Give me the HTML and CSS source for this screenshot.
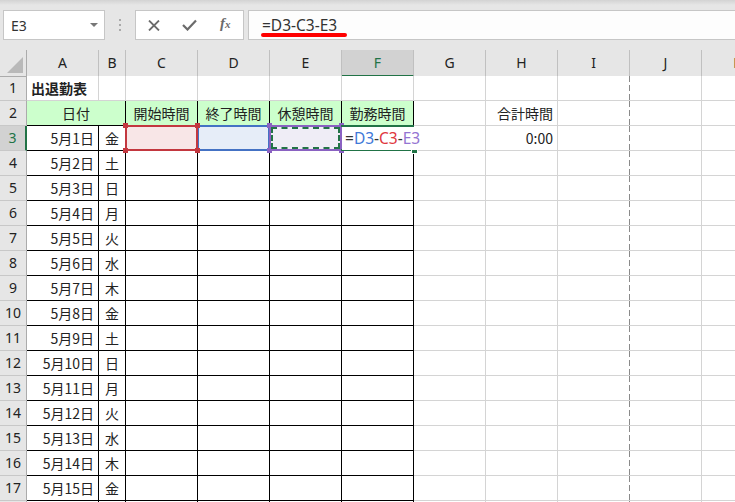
FILE: index.html
```html
<!DOCTYPE html>
<html lang="ja">
<head>
    <meta charset="UTF-8">
    <meta name="viewport" content="width=device-width, initial-scale=1.0">
    <title>出退勤表</title>
    <link rel="stylesheet" href="styles.css">
</head>
<body>

<!-- Formula bar -->
<div class="formula-bar">
    <div class="name-box">E3<span class="arrow"></span></div>
    <div class="grip"><i></i><i></i><i></i></div>
    <div class="fx-buttons">
        <span><svg width="12" height="11" viewBox="0 0 12 11"><path d="M1 0.5L11 10.5M11 0.5L1 10.5" stroke="#6b6b6b" stroke-width="1.8" fill="none"/></svg></span>
        <span><svg width="15" height="12" viewBox="0 0 15 12"><path d="M1 6L5.5 10.5L14 1.5" stroke="#6b6b6b" stroke-width="2.2" fill="none"/></svg></span>
        <span class="fx">f<small>x</small></span>
    </div>
    <div class="formula-input">
        <span>=D3-C3-E3</span>
        <span class="mark"></span>
    </div>
</div>

<!-- Sheet -->
<div class="sheet">
    <div class="row head">
        <div class="corner"><span></span></div>
        <div class="ch">A</div><div class="ch">B</div><div class="ch">C</div><div class="ch">D</div>
        <div class="ch">E</div><div class="ch sel">F</div><div class="ch">G</div><div class="ch">H</div>
        <div class="ch">I</div><div class="ch">J</div><div class="ch">K</div>
    </div>

    <div class="row">
        <div class="rh">1</div>
        <div class="c title">出退勤表</div><div class="c"></div><div class="c"></div><div class="c"></div>
        <div class="c"></div><div class="c"></div><div class="c"></div><div class="c"></div>
        <div class="c pb"></div><div class="c"></div><div class="c"></div>
    </div>

    <div class="row">
        <div class="rh">2</div>
        <div class="c t m green span2">日付</div>
        <div class="c t m green">開始時間</div><div class="c t m green">終了時間</div>
        <div class="c t m green">休憩時間</div><div class="c t m green">勤務時間</div>
        <div class="c"></div><div class="c r">合計時間</div>
        <div class="c pb"></div><div class="c"></div><div class="c"></div>
    </div>

    <div class="row">
        <div class="rh sel">3</div>
        <div class="c t r">5月1日</div><div class="c t m">金</div>
        <div class="c t fill-red"><span class="ref ref-red"></span></div>
        <div class="c t fill-blue"><span class="ref ref-blue"></span></div>
        <div class="c t fill-purple"><span class="ref ref-purple"></span></div>
        <div class="c t active"><span class="sel-box"></span><span class="editor">=<b class="blue">D3</b>-<b class="red">C3</b>-<b class="purple">E3</b></span></div>
        <div class="c"></div><div class="c r">0:00</div>
        <div class="c pb"></div><div class="c"></div><div class="c"></div>
    </div>

    <div class="row"><div class="rh">4</div><div class="c t r">5月2日</div><div class="c t m">土</div><div class="c t"></div><div class="c t"></div><div class="c t"></div><div class="c t"></div><div class="c"></div><div class="c"></div><div class="c pb"></div><div class="c"></div><div class="c"></div></div>
    <div class="row"><div class="rh">5</div><div class="c t r">5月3日</div><div class="c t m">日</div><div class="c t"></div><div class="c t"></div><div class="c t"></div><div class="c t"></div><div class="c"></div><div class="c"></div><div class="c pb"></div><div class="c"></div><div class="c"></div></div>
    <div class="row"><div class="rh">6</div><div class="c t r">5月4日</div><div class="c t m">月</div><div class="c t"></div><div class="c t"></div><div class="c t"></div><div class="c t"></div><div class="c"></div><div class="c"></div><div class="c pb"></div><div class="c"></div><div class="c"></div></div>
    <div class="row"><div class="rh">7</div><div class="c t r">5月5日</div><div class="c t m">火</div><div class="c t"></div><div class="c t"></div><div class="c t"></div><div class="c t"></div><div class="c"></div><div class="c"></div><div class="c pb"></div><div class="c"></div><div class="c"></div></div>
    <div class="row"><div class="rh">8</div><div class="c t r">5月6日</div><div class="c t m">水</div><div class="c t"></div><div class="c t"></div><div class="c t"></div><div class="c t"></div><div class="c"></div><div class="c"></div><div class="c pb"></div><div class="c"></div><div class="c"></div></div>
    <div class="row"><div class="rh">9</div><div class="c t r">5月7日</div><div class="c t m">木</div><div class="c t"></div><div class="c t"></div><div class="c t"></div><div class="c t"></div><div class="c"></div><div class="c"></div><div class="c pb"></div><div class="c"></div><div class="c"></div></div>
    <div class="row"><div class="rh">10</div><div class="c t r">5月8日</div><div class="c t m">金</div><div class="c t"></div><div class="c t"></div><div class="c t"></div><div class="c t"></div><div class="c"></div><div class="c"></div><div class="c pb"></div><div class="c"></div><div class="c"></div></div>
    <div class="row"><div class="rh">11</div><div class="c t r">5月9日</div><div class="c t m">土</div><div class="c t"></div><div class="c t"></div><div class="c t"></div><div class="c t"></div><div class="c"></div><div class="c"></div><div class="c pb"></div><div class="c"></div><div class="c"></div></div>
    <div class="row"><div class="rh">12</div><div class="c t r">5月10日</div><div class="c t m">日</div><div class="c t"></div><div class="c t"></div><div class="c t"></div><div class="c t"></div><div class="c"></div><div class="c"></div><div class="c pb"></div><div class="c"></div><div class="c"></div></div>
    <div class="row"><div class="rh">13</div><div class="c t r">5月11日</div><div class="c t m">月</div><div class="c t"></div><div class="c t"></div><div class="c t"></div><div class="c t"></div><div class="c"></div><div class="c"></div><div class="c pb"></div><div class="c"></div><div class="c"></div></div>
    <div class="row"><div class="rh">14</div><div class="c t r">5月12日</div><div class="c t m">火</div><div class="c t"></div><div class="c t"></div><div class="c t"></div><div class="c t"></div><div class="c"></div><div class="c"></div><div class="c pb"></div><div class="c"></div><div class="c"></div></div>
    <div class="row"><div class="rh">15</div><div class="c t r">5月13日</div><div class="c t m">水</div><div class="c t"></div><div class="c t"></div><div class="c t"></div><div class="c t"></div><div class="c"></div><div class="c"></div><div class="c pb"></div><div class="c"></div><div class="c"></div></div>
    <div class="row"><div class="rh">16</div><div class="c t r">5月14日</div><div class="c t m">木</div><div class="c t"></div><div class="c t"></div><div class="c t"></div><div class="c t"></div><div class="c"></div><div class="c"></div><div class="c pb"></div><div class="c"></div><div class="c"></div></div>
    <div class="row"><div class="rh">17</div><div class="c t r">5月15日</div><div class="c t m">金</div><div class="c t"></div><div class="c t"></div><div class="c t"></div><div class="c t"></div><div class="c"></div><div class="c"></div><div class="c pb"></div><div class="c"></div><div class="c"></div></div>
    <div class="row"><div class="rh"></div><div class="c t"></div><div class="c t"></div><div class="c t"></div><div class="c t"></div><div class="c t"></div><div class="c t"></div><div class="c"></div><div class="c"></div><div class="c pb"></div><div class="c"></div><div class="c"></div></div>
</div>

</body>
</html>
```

FILE: styles.css
```css
body {
    margin: 0;
    height: 502px;
    overflow: hidden;
    background-color: #e6e6e6;
    font-family: "Noto Sans CJK JP", sans-serif;
    color: #222;
}

/* Formula bar */
.formula-bar {
    display: flex;
    align-items: center;
    height: 50px;
    padding-left: 3px;
    background: linear-gradient(#d3d3d3, #e6e6e6 5px);
    overflow: hidden;
}
.name-box {
    flex: none;
    width: 102px;
    height: 30px;
    box-sizing: border-box;
    border: 1px solid #c6c6c6;
    background-color: #fff;
    display: flex;
    align-items: center;
    justify-content: space-between;
    padding: 0 6px 0 7px;
    font-family: "Noto Sans", sans-serif;
    font-size: 14px;
    color: #333;
}
.name-box .arrow {
    border-left: 4px solid transparent;
    border-right: 4px solid transparent;
    border-top: 4px solid #777;
}
.grip {
    flex: none;
    width: 30px;
    display: flex;
    flex-direction: column;
    align-items: center;
    gap: 3px;
}
.grip i {
    width: 2px;
    height: 2px;
    background-color: #aaa;
}
.fx-buttons {
    flex: none;
    width: 109px;
    height: 30px;
    box-sizing: border-box;
    border: 1px solid #c6c6c6;
    background-color: #fff;
    display: flex;
    margin-right: 4px;
}
.fx-buttons span {
    width: 36px;
    display: flex;
    justify-content: center;
    align-items: center;
}
.fx-buttons .fx {
    font-family: "Liberation Serif", serif;
    font-style: italic;
    font-weight: bold;
    font-size: 15px;
    color: #6b6b6b;
    align-items: baseline;
    padding-top: 4px;
}
.fx small {
    font-size: 11px;
}
.formula-input {
    flex: none;
    width: 520px;
    height: 30px;
    box-sizing: border-box;
    border: 1px solid #c6c6c6;
    background-color: #fdfdfd;
    position: relative;
    display: flex;
    align-items: center;
    padding-left: 13px;
    font-family: "Noto Sans", sans-serif;
    font-size: 15.5px;
    color: #333;
}
.formula-input .mark {
    position: absolute;
    left: 12px;
    top: 22px;
    width: 86px;
    height: 4px;
    border-radius: 2px;
    background-color: #f00;
}

/* Sheet grid */
.row {
    display: grid;
    grid-template-columns: 27px 72px 27px repeat(9, 72px);
    height: 25px;
}
.row.head {
    height: 26px;
}
.corner {
    display: flex;
    justify-content: flex-end;
    align-items: flex-end;
    padding: 0 3px 3px 0;
    box-sizing: border-box;
    border-right: 1px solid #ababab;
    border-bottom: 1px solid #ababab;
}
.corner span {
    width: 16px;
    height: 16px;
    background-color: #b9b9b9;
    clip-path: polygon(100% 0, 100% 100%, 0 100%);
}
.ch {
    box-sizing: border-box;
    border-right: 1px solid #c0c0c0;
    border-bottom: 1px solid #ababab;
    text-align: center;
    line-height: 25px;
    font-family: "Noto Sans", sans-serif;
    font-size: 14px;
    color: #222;
}
.ch.sel {
    background-color: #d2d2d2;
    border-bottom: 2px solid #217346;
    color: #217346;
}
.rh {
    box-sizing: border-box;
    border-right: 1px solid #ababab;
    border-bottom: 1px solid #c8c8c8;
    text-align: center;
    line-height: 24px;
    font-family: "Noto Sans", sans-serif;
    font-size: 14px;
    color: #222;
}
.rh.sel {
    background-color: #d2d2d2;
    border-right: 2px solid #217346;
    color: #217346;
}

/* Cells */
.c {
    position: relative;
    box-sizing: border-box;
    border-right: 1px solid #d4d4d4;
    border-bottom: 1px solid #d4d4d4;
    background-color: #fff;
    padding: 0 4px;
    line-height: 24px;
    font-size: 14px;
    white-space: nowrap;
}
.c.t {
    border-right-color: #000;
    border-bottom-color: #000;
}
.c.r {
    text-align: right;
}
.c.m {
    text-align: center;
    padding: 0;
}
.c.title {
    font-weight: bold;
}
.c.green {
    background-color: #ccffcc;
}
.c.span2 {
    grid-column: span 2;
}
.c.pb {
    border-right: none;
    background: #fff repeating-linear-gradient(#8a8a8a 0 6px, transparent 6px 9px) right top / 1px 100% no-repeat;
}

/* Formula references in row 3 */
.fill-red {
    background-color: #f8e6e7;
}
.fill-blue {
    background-color: #e6edf8;
}
.fill-purple {
    background-color: #efedf6;
}
.ref {
    position: absolute;
    left: -1px;
    top: -1px;
    right: -1px;
    bottom: -1px;
    border: 2px solid;
}
.ref-red {
    border-color: #c3373f;
    z-index: 2;
}
.ref-blue {
    border-color: #4472c4;
    z-index: 1;
}
.ref-purple {
    border-color: #8a62c2;
    z-index: 2;
}
.ref-red::before,
.ref-purple::before {
    content: "";
    position: absolute;
    left: -4px;
    top: -4px;
    width: 5px;
    height: 5px;
    background-color: currentColor;
}
.ref-red::before {
    color: #c3373f;
    box-shadow: 72px 0 #c3373f, 0 25px #c3373f, 72px 25px #c3373f;
}
.ref-purple::before {
    color: #8a62c2;
    box-shadow: 72px 0 #8a62c2, 0 25px #8a62c2, 72px 25px #8a62c2;
}
.ref-purple::after {
    content: "";
    position: absolute;
    left: 0;
    top: 0;
    right: 0;
    bottom: 0;
    border: 2px dashed #217346;
}

/* Active cell being edited */
.active {
    overflow: visible;
    padding-left: 0;
}
.sel-box {
    position: absolute;
    left: -1px;
    top: -1px;
    right: -1px;
    bottom: -1px;
    border-top: 2px solid #217346;
    border-bottom: 2px solid #217346;
    z-index: 3;
}
.sel-box::after {
    content: "";
    position: absolute;
    right: -4px;
    bottom: -5px;
    width: 5px;
    height: 5px;
    background-color: #217346;
    border: 1px solid #fff;
}
.editor {
    position: relative;
    z-index: 4;
    display: inline-block;
    background-color: #fff;
    padding: 0 3px 0 3px;
    line-height: 23px;
    font-family: "Noto Sans", sans-serif;
    font-size: 15.5px;
    color: #333;
}
.editor b {
    font-weight: normal;
}
.editor .blue {
    color: #3f78d8;
}
.editor .red {
    color: #e0383f;
}
.editor .purple {
    color: #9474d2;
}
```
